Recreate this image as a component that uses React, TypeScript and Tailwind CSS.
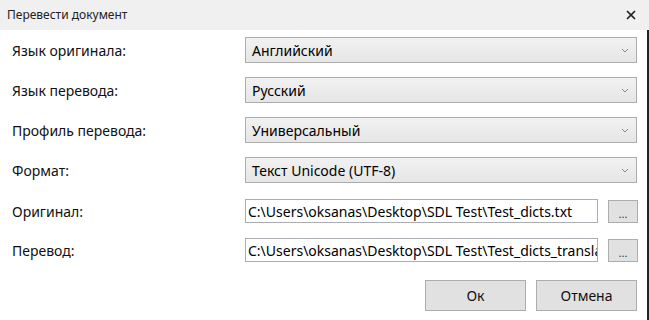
import { X } from "lucide-react";

const font = { fontFamily: '"Noto Sans", "Open Sans", sans-serif' };

function Chevron() {
  return (
    <svg width="8" height="5" viewBox="0 0 8 5" className="shrink-0">
      <path d="M1 1 L4 4 L7 1" fill="none" stroke="#8a8a8a" strokeWidth="1" />
    </svg>
  );
}

function Combo({ value }: { value: string }) {
  return (
    <div className="flex h-[26px] w-[392px] items-center justify-between border border-[#acacac] bg-gradient-to-b from-[#f2f2f2] to-[#e6e6e6] pl-[6px] pr-[7px]">
      <span className="text-[14px] text-black">{value}</span>
      <Chevron />
    </div>
  );
}

function PathField({ value }: { value: string }) {
  return (
    <div className="flex items-center gap-[10px]">
      <input
        readOnly
        value={value}
        className="h-[24px] w-[353px] border border-[#abadb3] bg-white pl-[2px] text-[14px] text-black outline-none"
      />
      <button className="flex h-[23px] w-[30px] items-end justify-center border border-[#adadad] bg-[#e1e1e1] pb-[3px] text-[11px] leading-none text-[#333]">
        ...
      </button>
    </div>
  );
}

function Row({ label, children, className }: { label: string; children: React.ReactNode; className?: string }) {
  return (
    <div className={"flex items-center " + (className ?? "")}>
      <div className="w-[233px] text-[14px] text-[#111]">{label}</div>
      {children}
    </div>
  );
}

export default function App() {
  return (
    <div className="h-[320px] w-[649px] overflow-hidden bg-white" style={font}>
      <div className="flex h-[30px] items-center justify-between bg-[#f0f0f0] pl-[7px] pr-[11px]">
        <span className="text-[12px] text-[#222]">Перевести документ</span>
        <X className="h-[14px] w-[14px] text-[#222]" strokeWidth={3} />
      </div>
      <div className="h-[290px] border-r-2 border-[#222] pl-[12px]">
        <Row label="Язык оригинала:" className="pt-[7px]">
          <Combo value="Английский" />
        </Row>
        <Row label="Язык перевода:" className="mt-[14px]">
          <Combo value="Русский" />
        </Row>
        <Row label="Профиль перевода:" className="mt-[14px]">
          <Combo value="Универсальный" />
        </Row>
        <Row label="Формат:" className="mt-[14px]">
          <Combo value="Текст Unicode (UTF-8)" />
        </Row>
        <Row label="Оригинал:" className="mt-[16px]">
          <PathField value="C:\Users\oksanas\Desktop\SDL Test\Test_dicts.txt" />
        </Row>
        <Row label="Перевод:" className="mt-[15px]">
          <PathField value="C:\Users\oksanas\Desktop\SDL Test\Test_dicts_translated.txt" />
        </Row>
        <div className="mt-[18px] flex justify-end gap-[10px] pr-[10px]">
          <button className="h-[31px] w-[101px] border border-[#adadad] bg-[#e1e1e1] text-[14px] text-[#111]">Ок</button>
          <button className="h-[31px] w-[101px] border border-[#adadad] bg-[#e1e1e1] text-[14px] text-[#111]">Отмена</button>
        </div>
      </div>
    </div>
  );
}
